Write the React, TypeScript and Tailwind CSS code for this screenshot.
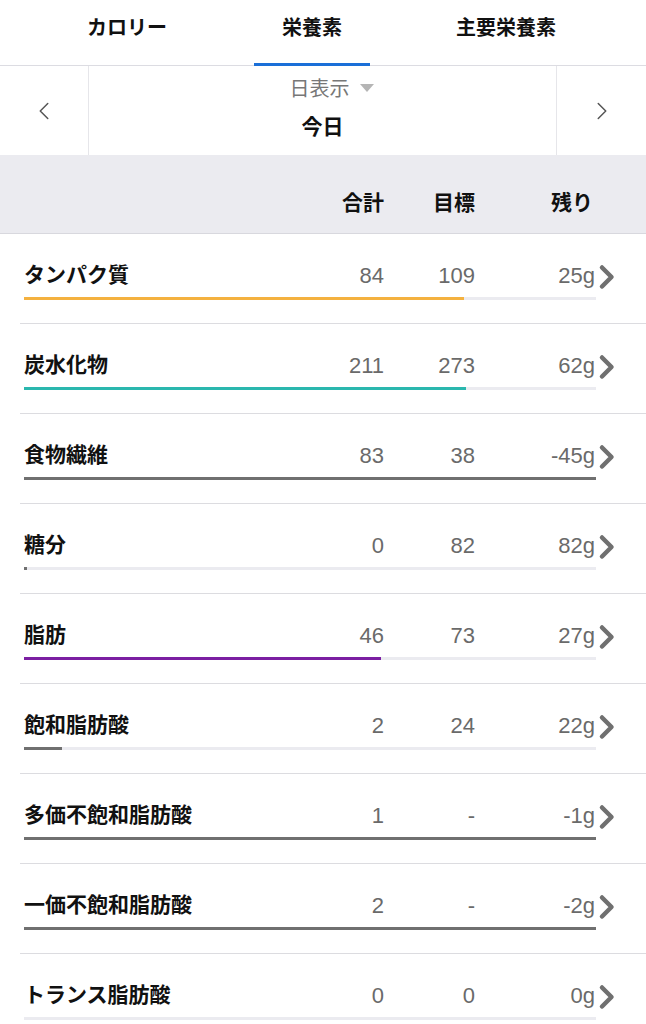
import { ChevronLeft, ChevronRight } from 'lucide-react';

type Row = {
  name: string;
  total: string;
  goal: string;
  left: string;
  pct: number;
  color: string;
};

const rows: Row[] = [
  { name: 'タンパク質', total: '84', goal: '109', left: '25g', pct: 77, color: 'bg-[#f4b13f]' },
  { name: '炭水化物', total: '211', goal: '273', left: '62g', pct: 77.3, color: 'bg-[#2ab7ae]' },
  { name: '食物繊維', total: '83', goal: '38', left: '-45g', pct: 100, color: 'bg-[#707070]' },
  { name: '糖分', total: '0', goal: '82', left: '82g', pct: 0.6, color: 'bg-[#707070]' },
  { name: '脂肪', total: '46', goal: '73', left: '27g', pct: 62.4, color: 'bg-[#7b1fa2]' },
  { name: '飽和脂肪酸', total: '2', goal: '24', left: '22g', pct: 6.7, color: 'bg-[#707070]' },
  { name: '多価不飽和脂肪酸', total: '1', goal: '-', left: '-1g', pct: 100, color: 'bg-[#707070]' },
  { name: '一価不飽和脂肪酸', total: '2', goal: '-', left: '-2g', pct: 100, color: 'bg-[#707070]' },
  { name: 'トランス脂肪酸', total: '0', goal: '0', left: '0g', pct: 0, color: 'bg-[#707070]' },
];

const font = { fontFamily: '"Liberation Sans", "Noto Sans CJK JP", sans-serif' };

function RowChevron() {
  return (
    <svg width="18" height="26" viewBox="0 0 18 26" className="text-[#707070]">
      <path d="M4 3.5 L13.5 13 L4 22.5" fill="none" stroke="currentColor" strokeWidth={4.5} strokeLinecap="round" strokeLinejoin="round" />
    </svg>
  );
}

export default function App() {
  return (
    <div className="w-[646px] h-[1024px] overflow-hidden bg-white text-[#111]" style={font}>
      {/* Tabs */}
      <div className="flex h-[66px] border-b border-[#dcdce2]">
        <div className="w-[254px] flex items-center justify-center text-[20px] font-bold pb-[10px]">カロリー</div>
        <div className="w-[116px] relative flex items-center justify-center text-[20px] font-bold pb-[10px]">
          栄養素
          <div className="absolute left-0 right-0 -bottom-px h-[3px] bg-[#1a6fd8]" />
        </div>
        <div className="flex-1 flex items-center justify-center text-[20px] font-bold pb-[10px] pr-[4px]">主要栄養素</div>
      </div>

      {/* Date nav */}
      <div className="flex h-[89px]">
        <div className="w-[89px] flex items-center justify-center border-r border-[#e6e6ea]">
          <ChevronLeft size={30} strokeWidth={1.2} className="text-[#555]" />
        </div>
        <div className="flex-1 flex flex-col items-center justify-center pb-[6px]">
          <div className="flex items-center gap-[10px] text-[20px] text-[#777] leading-[26px] ml-[18px]">
            日表示
            <svg width="14" height="9" viewBox="0 0 14 9"><path d="M0 0 H14 L7 8 Z" fill="#b5b5b5" /></svg>
          </div>
          <div className="text-[21px] font-bold mt-[12px] leading-[26px]">今日</div>
        </div>
        <div className="w-[90px] flex items-center justify-center border-l border-[#e6e6ea]">
          <ChevronRight size={30} strokeWidth={1.2} className="text-[#555]" />
        </div>
      </div>

      {/* Column header */}
      <div className="h-[79px] bg-[#ebebf0] border-b border-[#d8d8de] flex items-center pt-[18px] text-[21px] font-bold">
        <div className="flex-1" />
        <div className="w-[60px] text-right">合計</div>
        <div className="w-[91px] text-right">目標</div>
        <div className="w-[118px] text-right">残り</div>
        <div className="w-[53px]" />
      </div>

      {/* Rows */}
      {rows.map((r) => (
        <div key={r.name} className="h-[90px] relative">
          <div className="flex items-center pt-[26px] pl-[24px] h-[56px]">
            <div className="flex-1 text-[21px] font-bold">{r.name}</div>
            <div className="w-[60px] text-right text-[22px] text-[#6a6a6a]">{r.total}</div>
            <div className="w-[91px] text-right text-[22px] text-[#6a6a6a]">{r.goal}</div>
            <div className="w-[120px] text-right text-[22px] text-[#6a6a6a]">{r.left}</div>
            <div className="w-[51px] flex pl-[3px] pt-[4px]">
              <RowChevron />
            </div>
          </div>
          <div className="ml-[24px] w-[572px] h-[3px] mt-[7px] bg-[#ebebf0]">
            <div className={`h-full ${r.color}`} style={{ width: `${r.pct}%` }} />
          </div>
          <div className="absolute bottom-0 left-[20px] right-0 h-px bg-[#dcdce0]" />
        </div>
      ))}
    </div>
  );
}
